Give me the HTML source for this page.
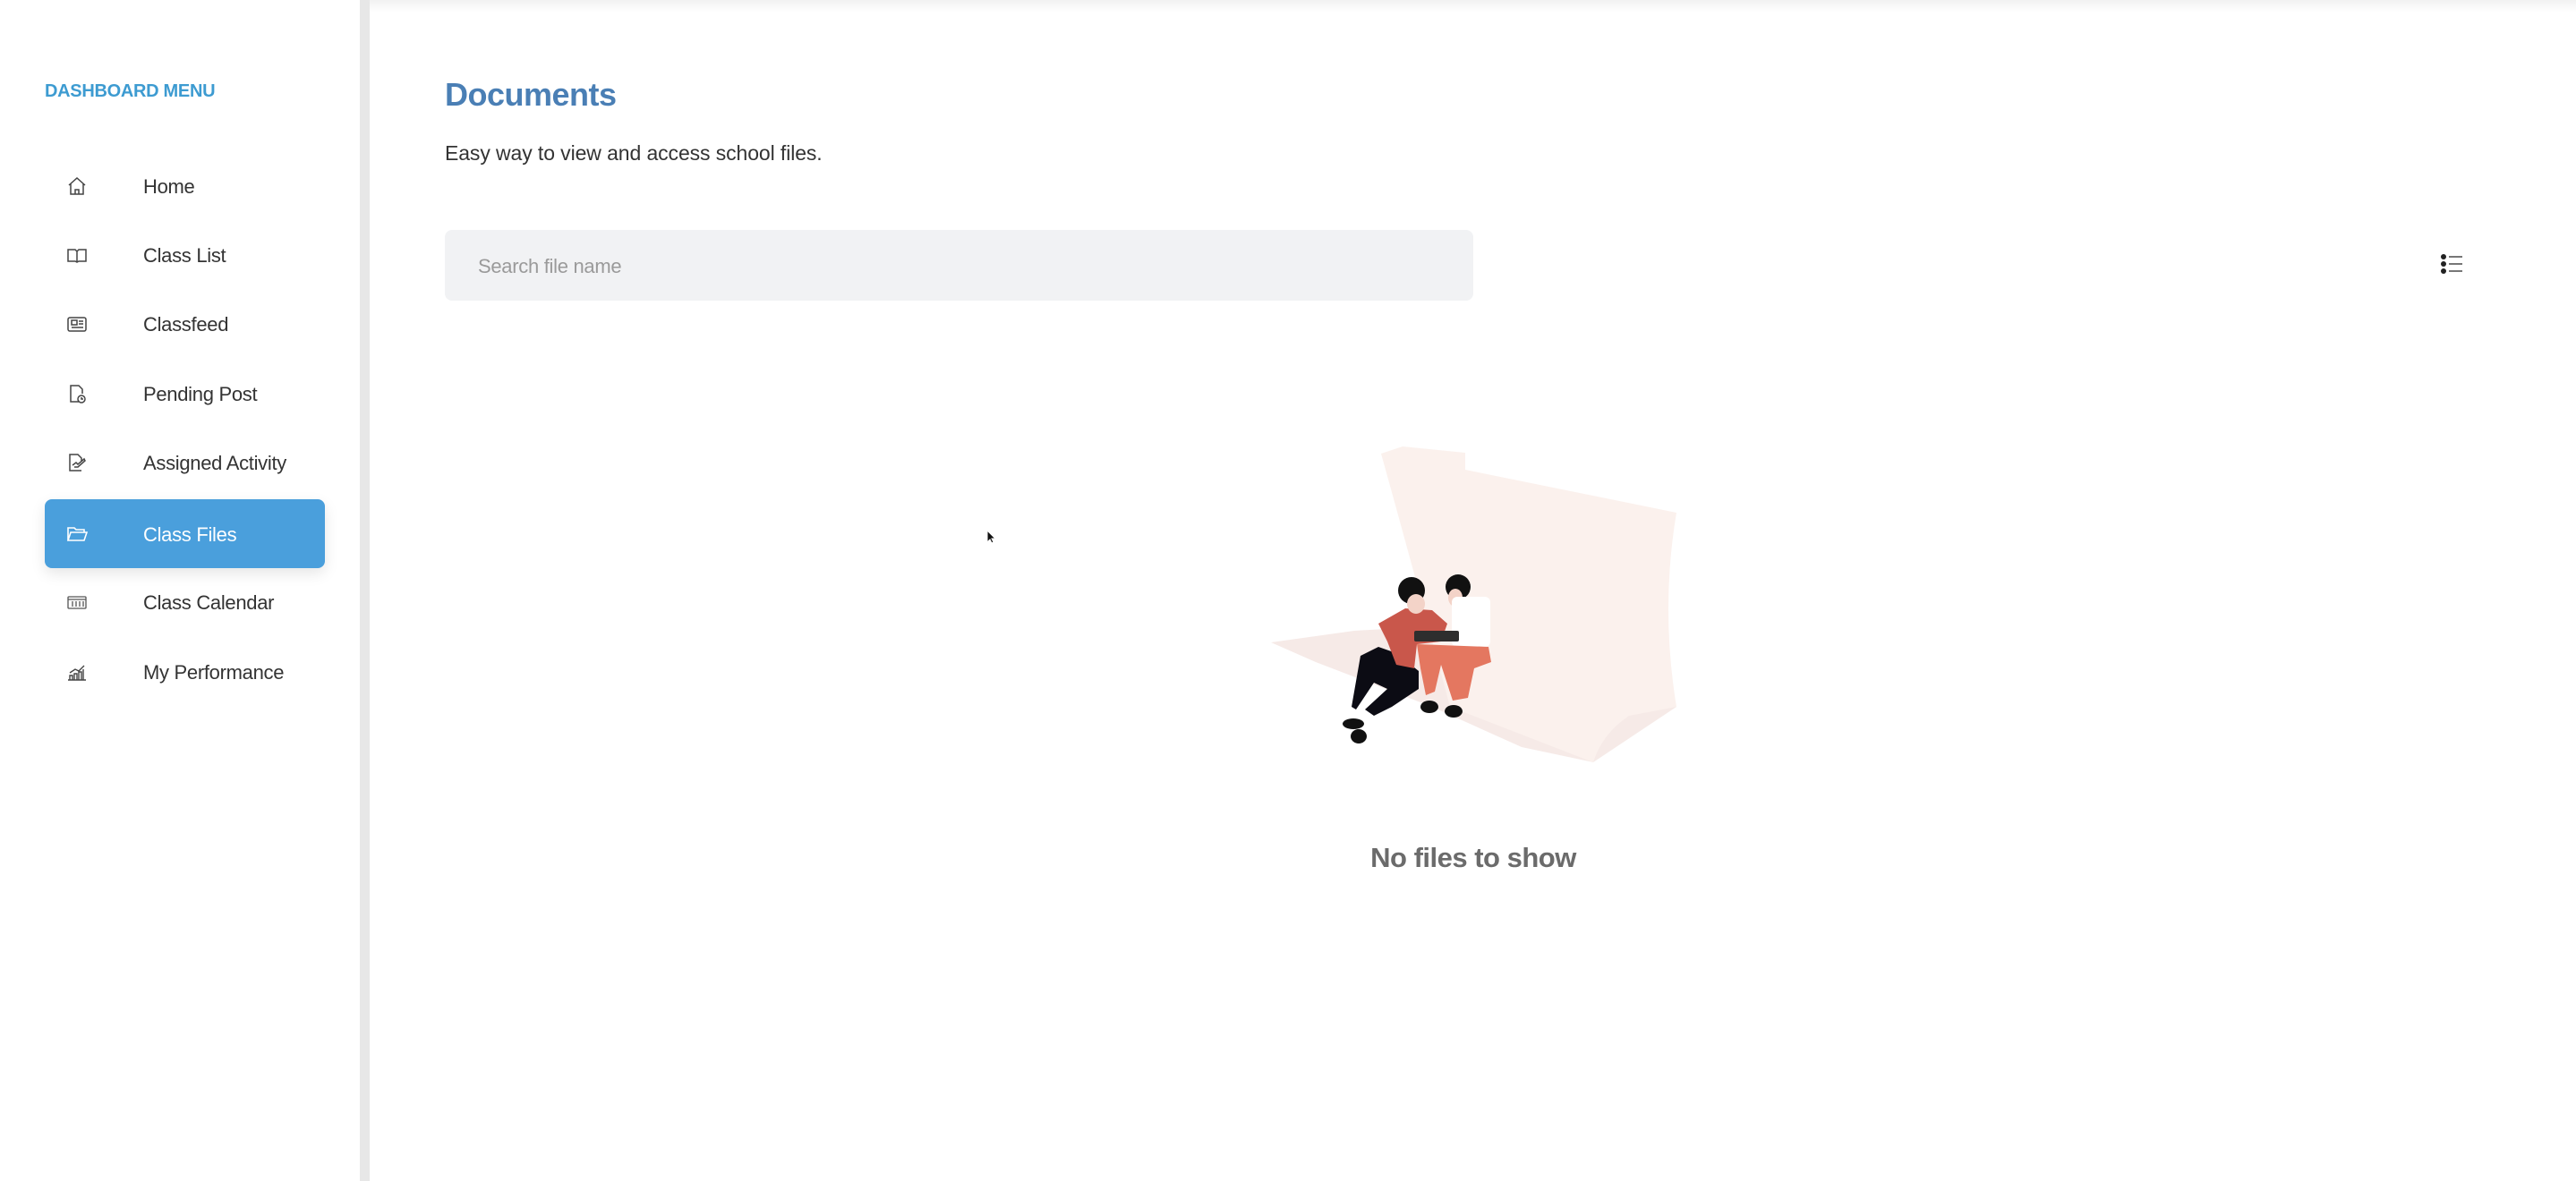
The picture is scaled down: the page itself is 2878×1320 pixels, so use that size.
<!DOCTYPE html>
<html><head><meta charset="utf-8"><style>
*{margin:0;padding:0;box-sizing:border-box}
html,body{width:2878px;height:1320px;overflow:hidden;background:#fff;font-family:"Liberation Sans",sans-serif}
.side{position:absolute;left:0;top:0;width:402px;height:1320px;background:#fff}
.bar{position:absolute;left:402px;top:0;width:11px;height:1320px;background:#e7e7e7}
.topsh{position:absolute;left:413px;top:0;width:2465px;height:14px;background:linear-gradient(#f1f1f1,#fff)}
.menu{position:absolute;left:50px;top:91px;font-size:20px;font-weight:bold;color:#3d9bd1;letter-spacing:-0.3px}
.item{position:absolute;left:50px;width:313px;height:77px;border-radius:8px}
.item svg{position:absolute;left:24px;top:27px;width:24px;height:24px}
.item span{position:absolute;left:110px;top:1px;line-height:77px;font-size:22px;color:#333;letter-spacing:-0.3px}
.act{background:#4a9fdc;box-shadow:0 6px 16px rgba(0,0,0,.1)}
.act span{color:#fff}
h1{position:absolute;left:497px;top:85px;font-size:36px;color:#4a7fb5;letter-spacing:-0.5px}
.sub{position:absolute;left:497px;top:158px;font-size:23px;color:#333;letter-spacing:-0.1px}
.search{position:absolute;left:497px;top:257px;width:1149px;height:79px;background:#f1f2f4;border-radius:8px}
.search span{position:absolute;left:37px;top:1px;line-height:79px;font-size:22px;color:#9a9a9a;letter-spacing:-0.3px}
.nf{position:absolute;left:1446px;width:400px;text-align:center;top:941px;font-size:31px;font-weight:bold;color:#6b6b6b;letter-spacing:-0.5px}
</style></head><body>
<div class="side">
<div class="menu">DASHBOARD MENU</div>
<div class="item" style="top:169px"><svg viewBox="0 0 24 24" fill="none" stroke="#444" stroke-width="1.5"><path d="M3 11L12 3l9 8M5 9v12h14V9M10 21v-5h4v5"/></svg><span>Home</span></div>
<div class="item" style="top:246px"><svg viewBox="0 0 24 24" fill="none" stroke="#444" stroke-width="1.5"><path d="M2 6h8l2 2 2-2h8v13h-8l-2 1-2-1H2zM12 8v12"/></svg><span>Class List</span></div>
<div class="item" style="top:323px"><svg viewBox="0 0 24 24" fill="none" stroke="#444" stroke-width="1.5"><rect x="2" y="5" width="20" height="15" rx="2"/><rect x="6" y="8" width="6" height="5"/><path d="M14 9h5M14 12h5M6 16h13"/></svg><span>Classfeed</span></div>
<div class="item" style="top:401px"><svg viewBox="0 0 24 24" fill="none" stroke="#444" stroke-width="1.5"><path d="M14 21H5V3h9l4 4v5"/><circle cx="17" cy="18" r="4"/><path d="M17 16v2h2"/></svg><span>Pending Post</span></div>
<div class="item" style="top:478px"><svg viewBox="0 0 24 24" fill="none" stroke="#444" stroke-width="1.5"><path d="M17 21H4V3h9l4 4v3"/><path d="M7 15l4-3 2 2 7-6 1 2-8 7H9"/></svg><span>Assigned Activity</span></div>
<div class="item act" style="top:558px"><svg viewBox="0 0 24 24" fill="none" stroke="#fff" stroke-width="1.6"><path d="M2 19V5h7l2 2h9v3M2 19l3-9h18l-3 9z"/></svg><span>Class Files</span></div>
<div class="item" style="top:634px"><svg viewBox="0 0 24 24" fill="none" stroke="#555" stroke-width="1.3"><rect x="2" y="6" width="20" height="13" rx="1"/><path d="M2 9h20M7 11v6M11 11v6M15 11v6M19 11v6"/></svg><span>Class Calendar</span></div>
<div class="item" style="top:712px"><svg viewBox="0 0 24 24" fill="none" stroke="#444" stroke-width="1.4"><path d="M2 21h20M4 21v-5h3v5M9 21v-7h3v7M14 21v-9h3v9M19 21V9M4 13l6-4 4 2 6-6"/></svg><span>My Performance</span></div>
</div>
<div class="bar"></div>
<div class="topsh"></div>
<h1>Documents</h1>
<div class="sub">Easy way to view and access school files.</div>
<div class="search"><span>Search file name</span></div>
<svg style="position:absolute;left:2726px;top:283px" width="28" height="24" viewBox="0 0 28 24"><g fill="#222"><circle cx="4" cy="4" r="3"/><circle cx="4" cy="12" r="3"/><circle cx="4" cy="20" r="3"/></g><g stroke="#777" stroke-width="2"><path d="M10 4h15M10 12h15M10 20h15"/></g></svg>
<svg style="position:absolute;left:1102px;top:592px" width="12" height="16" viewBox="0 0 12 16"><path d="M1 1v13l3-3 2 4 2-1-2-4h4z" fill="#111" stroke="#fff" stroke-width="1"/></svg>
<svg style="position:absolute;left:0;top:0" width="2878" height="1320">
<polygon points="1420,718 1513,705 1600,700 1873,790 1780,852 1700,835 1600,790 1470,740" fill="#f6eae7"/>
<path d="M1543,507 L1567,499 L1637,506 L1637,525 L1873,573 Q1855,680 1873,790 L1820,800 Q1790,820 1780,852 L1620,790 Q1580,640 1543,507Z" fill="#fbf1ed"/>
<polygon points="1520,733 1540,723 1560,730 1585,750 1585,770 1555,790 1535,800 1525,793 1550,770 1535,763 1515,793 1510,790" fill="#0c0c14"/>
<ellipse cx="1512" cy="809" rx="12" ry="6" fill="#111"/>
<ellipse cx="1518" cy="823" rx="9" ry="8" fill="#111"/>
<polygon points="1540,697 1570,680 1600,682 1617,697 1610,717 1583,720 1580,747 1560,743 1550,717" fill="#c9574b"/>
<circle cx="1577" cy="660" r="15" fill="#111"/>
<ellipse cx="1582" cy="675" rx="10" ry="11" fill="#f3d3c8"/>
<circle cx="1629" cy="656" r="14" fill="#111"/>
<ellipse cx="1626" cy="668" rx="8" ry="10" fill="#f3d3c8"/>
<rect x="1622" y="667" width="43" height="56" rx="6" fill="#fff"/>
<rect x="1580" y="705" width="50" height="12" rx="2" fill="#2e2e2e"/>
<polygon points="1583,720 1663,723 1666,740 1647,747 1640,780 1623,783 1610,743 1603,773 1593,777 1587,747" fill="#e47760"/>
<ellipse cx="1597" cy="790" rx="10" ry="7" fill="#111"/>
<ellipse cx="1624" cy="795" rx="10" ry="7" fill="#111"/>
</svg>
<div class="nf">No files to show</div>
</body></html>
